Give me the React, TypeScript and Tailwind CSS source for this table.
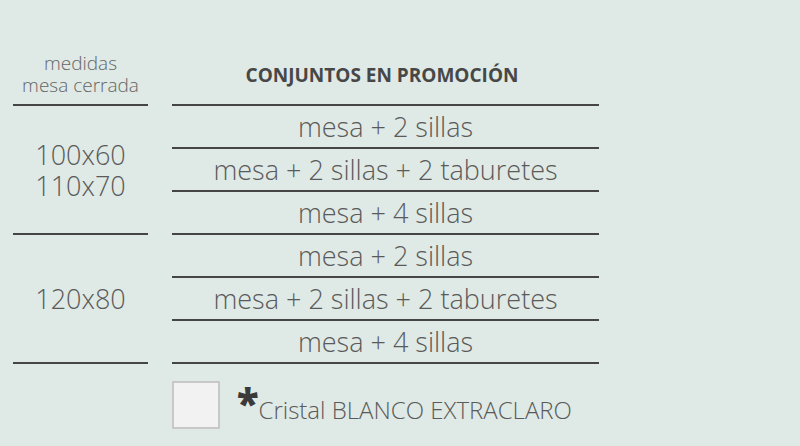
import React from "react";

const groups = [
  { sizes: ["100x60", "110x70"], rows: ["mesa + 2 sillas", "mesa + 2 sillas + 2 taburetes", "mesa + 4 sillas"] },
  { sizes: ["120x80"], rows: ["mesa + 2 sillas", "mesa + 2 sillas + 2 taburetes", "mesa + 4 sillas"] },
];

export default function App() {
  return (
    <div
      className="w-[800px] h-[446px] bg-[#dfe9e5] text-[#5a5a5a] overflow-hidden"
      style={{ fontFamily: '"Open Sans", "Noto Sans", sans-serif' }}
    >
      <div className="flex gap-[24px] pl-[13px]">
        {/* left column */}
        <div className="w-[135px] flex flex-col">
          <div className="h-[106px] flex flex-col justify-end items-center pb-[8px] border-b-2 border-[#454545] text-[19px] leading-[22px] font-light text-[#666]">
            <div>medidas</div>
            <div>mesa cerrada</div>
          </div>
          {groups.map((g, i) => (
            <div
              key={i}
              className="h-[129px] flex flex-col justify-center items-center border-b-2 border-[#454545] text-[27px] leading-[31px] font-light"
            >
              {g.sizes.map((s) => (
                <div key={s}>{s}</div>
              ))}
            </div>
          ))}
        </div>
        {/* right column */}
        <div className="w-[427px] flex flex-col">
          <div className="h-[106px] flex items-end justify-center pb-[18px] pr-[7px] border-b-2 border-[#454545] text-[19px] leading-[22px] font-bold text-[#474747]">
            CONJUNTOS EN PROMOCIÓN
          </div>
          {groups.map((g) =>
            g.rows.map((r, j) => (
              <div
                key={g.sizes[0] + j}
                className="h-[43px] flex items-center justify-center border-b-2 border-[#454545] text-[27px] leading-[30px] font-light"
              >
                {r}
              </div>
            ))
          )}
          <div className="flex items-center mt-[17px]">
            <div className="w-[48px] h-[48px] bg-[#f2f2f2] border-2 border-[#c8c8c8]" />
            <div className="ml-[17px] flex items-start">
              <span className="text-[40px] leading-[30px] font-extrabold text-[#3a3a3a] mt-[2px]">*</span>
              <span className="text-[24px] leading-[30px] mt-[9px] font-light">Cristal BLANCO EXTRACLARO</span>
            </div>
          </div>
        </div>
      </div>
    </div>
  );
}
